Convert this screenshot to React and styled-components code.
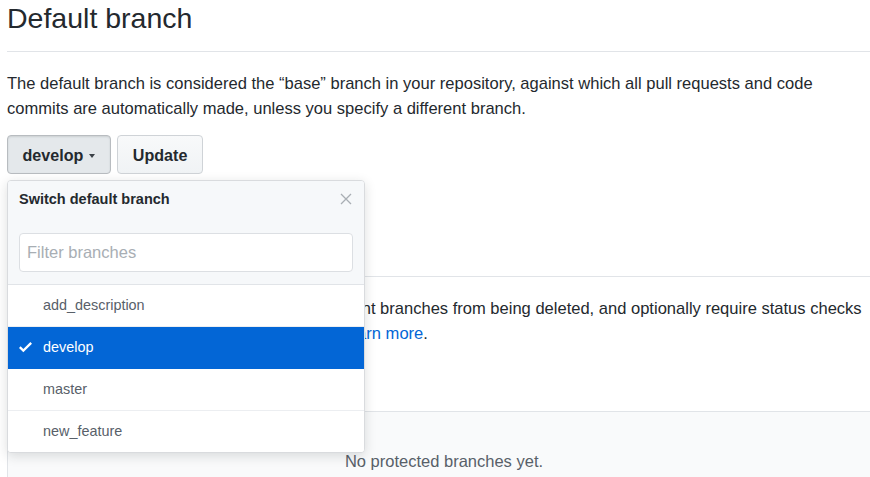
import React from "react";
import styled, { createGlobalStyle } from "styled-components";

const Global = createGlobalStyle`
  html, body {
    margin: 0;
    padding: 0;
    background: #ffffff;
    overflow: hidden;
  }
  body {
    font-family: "Liberation Sans", Arial, Helvetica, sans-serif;
    color: #24292e;
  }
  * { box-sizing: border-box; }
`;

const Page = styled.div`
  width: 868px;
  margin-left: 7px;
`;

const Subhead = styled.div`
  padding-top: ${(p) => (p.$spacious ? "0" : "1px")};
  margin-top: ${(p) => (p.$spacious ? "52px" : "0")};
  padding-bottom: 15px;
  border-bottom: 1px solid #e1e4e8;
`;

const SubheadHeading = styled.h2`
  margin: 0;
  font-size: 28.5px;
  font-weight: 400;
  line-height: 35px;
  color: #24292e;
`;

const Lead = styled.p`
  margin: ${(p) => (p.$tight ? "18.5px" : "19px")} 0 0;
  font-size: 16.55px;
  line-height: 25px;
  color: #24292e;
`;

const Link = styled.a`
  color: #0366d6;
  text-decoration: none;
`;

const ButtonRow = styled.div`
  display: flex;
  gap: 6px;
  margin-top: 14px;
`;

const MenuWrap = styled.div`
  position: relative;
`;

const Btn = styled.button`
  display: inline-flex;
  align-items: center;
  height: 39px;
  padding: 0 15px 0 14.5px;
  font-family: inherit;
  font-size: 16.1px;
  font-weight: 700;
  line-height: 24px;
  color: #24292e;
  border-radius: 4px;
  border: 1px solid ${(p) => (p.$selected ? "#b8bcc0" : "#cfd3d7")};
  background: ${(p) =>
    p.$selected ? "#e4e8eb" : "linear-gradient(#f8f9fa, #f0f3f5)"};
  box-shadow: ${(p) =>
    p.$selected ? "inset 0 1px 2px rgba(27,31,35,0.12)" : "none"};
  cursor: pointer;
`;

const Caret = styled.span`
  display: inline-block;
  width: 0;
  height: 0;
  margin-left: 6px;
  margin-top: 2px;
  border-top: 4px solid #3a4047;
  border-left: 3.5px solid transparent;
  border-right: 3.5px solid transparent;
`;

const Menu = styled.div`
  position: absolute;
  top: calc(100% + 6px);
  left: 0;
  z-index: 10;
  width: 358px;
  background: #ffffff;
  border: 1px solid #d9dbde;
  border-radius: 4px;
  box-shadow: 0 3px 12px rgba(27, 31, 35, 0.15);
  overflow: hidden;
`;

const MenuHeader = styled.div`
  display: flex;
  align-items: center;
  justify-content: space-between;
  height: 40px;
  padding: 8px 12px 12px 11px;
  background: #f6f8fa;
`;

const MenuTitle = styled.span`
  font-size: 14.5px;
  font-weight: 700;
  line-height: 20px;
  color: #24292e;
`;

const CloseBtn = styled.span`
  display: flex;
  width: 12px;
  height: 12px;
`;

const MenuFilters = styled.div`
  padding: 12px 11px;
  background: #f6f8fa;
  border-bottom: 1px solid #e1e4e8;
`;

const FilterInput = styled.input`
  display: block;
  width: 100%;
  height: 39px;
  padding: 0 7px;
  font-family: inherit;
  font-size: 16.5px;
  color: #24292e;
  background: #ffffff;
  border: 1px solid #dcdfe3;
  border-radius: 4px;
  outline: none;
  &::placeholder {
    color: #a8aeb4;
  }
`;

const Item = styled.div`
  display: flex;
  align-items: center;
  height: ${(p) => (p.$last ? "41px" : "42px")};
  padding: 0 11px;
  font-size: 14.4px;
  line-height: 21px;
  color: ${(p) => (p.$selected ? "#ffffff" : "#586069")};
  background: ${(p) => (p.$selected ? "#0366d6" : "#ffffff")};
  border-bottom: ${(p) =>
    p.$last ? "none" : `1px solid ${p.$selected ? "#0366d6" : "#eceef1"}`};
`;

const IconSlot = styled.span`
  display: flex;
  align-items: center;
  width: 24px;
  flex: none;
`;

const Box = styled.div`
  margin-top: 65.5px;
  margin-right: -6px;
  border: 1px solid #e1e4e8;
  border-radius: 4px;
  background: #f9fafb;
`;

const Blankslate = styled.p`
  margin: 0;
  padding: 37px 0 37px;
  text-align: center;
  font-size: 16.5px;
  line-height: 25px;
  color: #586069;
`;

const CheckIcon = () => (
  <svg width="13" height="10.3" viewBox="0 3.5 12 9.5" fill="#ffffff">
    <path d="M12 5l-8 8-4-4 1.5-1.5L4 10l6.5-6.5L12 5z" />
  </svg>
);

const CloseIcon = () => (
  <svg width="12" height="12" viewBox="0 0 12 12">
    <path
      d="M1 1L11 11M11 1L1 11"
      stroke="#a9aeb4"
      strokeWidth="1.3"
      fill="none"
    />
  </svg>
);

const branches = ["add_description", "develop", "master", "new_feature"];

export default function App() {
  const current = "develop";
  return (
    <>
      <Global />
      <Page>
        <Subhead>
          <SubheadHeading>Default branch</SubheadHeading>
        </Subhead>
        <Lead>
          The default branch is considered the “base” branch in your
          repository, against which all pull requests and code commits are
          automatically made, unless you specify a different branch.
        </Lead>
        <ButtonRow>
          <MenuWrap>
            <Btn $selected>
              develop
              <Caret />
            </Btn>
            <Menu>
              <MenuHeader>
                <MenuTitle>Switch default branch</MenuTitle>
                <CloseBtn>
                  <CloseIcon />
                </CloseBtn>
              </MenuHeader>
              <MenuFilters>
                <FilterInput placeholder="Filter branches" />
              </MenuFilters>
              {branches.map((b, i) => (
                <Item
                  key={b}
                  $selected={b === current}
                  $last={i === branches.length - 1}
                >
                  <IconSlot>{b === current && <CheckIcon />}</IconSlot>
                  {b}
                </Item>
              ))}
            </Menu>
          </MenuWrap>
          <Btn>Update</Btn>
        </ButtonRow>
        <Subhead $spacious>
          <SubheadHeading>Protected branches</SubheadHeading>
        </Subhead>
        <Lead $tight>
          Protect branches to disable force pushing, prevent branches from
          being deleted, and optionally require status checks before merging.
          New to protected branches? <Link href="#">Learn more</Link>.
        </Lead>
        <Box>
          <Blankslate>No protected branches yet.</Blankslate>
        </Box>
      </Page>
    </>
  );
}
